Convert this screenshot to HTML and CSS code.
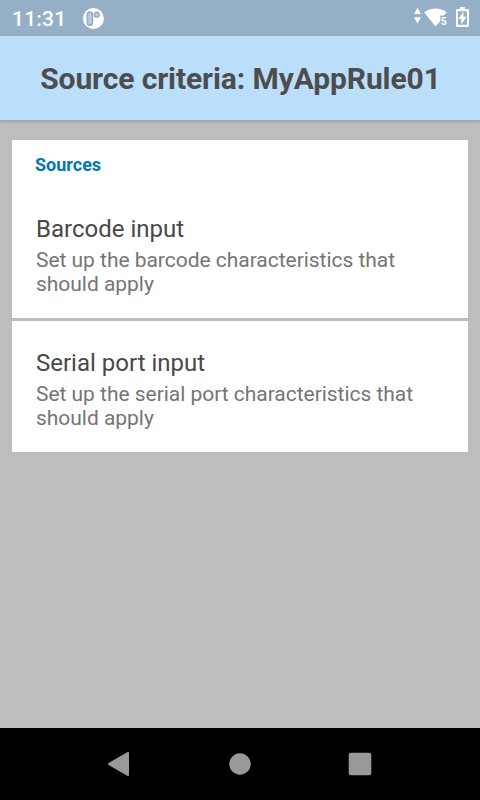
FILE: index.html
```html
<!DOCTYPE html>
<html lang="en">
<head>
<meta charset="utf-8">
<title>Source criteria</title>
<link rel="stylesheet" href="styles.css">
</head>
<body>
<div class="screen">
  <div class="status">
    <span class="clock">11:31</span>
    <svg class="app-icon" width="22" height="22" viewBox="0 0 22 22">
      <circle cx="11.4" cy="11.4" r="10.5" fill="#fff"/>
      <rect x="5.4" y="5.2" width="5" height="13" rx="2.5" fill="#bccddb" stroke="#95b0c6" stroke-width="1.7"/>
      <circle cx="14.7" cy="7.7" r="2.3" fill="#bccddb" stroke="#95b0c6" stroke-width="1.7"/>
    </svg>
    <svg class="signals" width="56" height="22" viewBox="0 0 56 22" fill="#fff">
      <path d="M4.5 .7 8 7H1zM4.5 16.4 8 10.2H1z"/>
      <path d="M11.2 5.2Q16.5 1.6 22.5 1.6T33.8 5.2L30.8 8.6H27.3V14L22.5 19.5z"/>
      <text class="band" x="27.8" y="17.8">5</text>
      <path fill-rule="evenodd" d="M44 2H46.8V0h5v2H55q1 0 1 1V19q0 1-1 1H44q-1 0-1-1V3q0-1 1-1zM45 4.2V17.8H54V4.2z"/>
      <path d="M50.4 4.4 45.4 12.1H48.3V17.6L53.5 9.8H50.4z"/>
    </svg>
  </div>
  <header class="titlebar"><h1>Source criteria: MyAppRule01</h1></header>
  <main class="content">
    <section class="card first">
      <h2>Sources</h2>
      <div class="item"><h3>Barcode input</h3><p>Set up the barcode characteristics that<br>should apply</p></div>
    </section>
    <section class="card">
      <div class="item"><h3>Serial port input</h3><p>Set up the serial port characteristics that<br>should apply</p></div>
    </section>
  </main>
  <nav class="navbar">
    <svg width="480" height="72" viewBox="0 0 480 72" fill="#999">
      <path d="M108.6 35 127.2 24.2Q129 23.3 129 25.2V46.8Q129 48.7 127.2 47.8L108.6 37Q107.4 36 108.6 35z"/>
      <circle cx="240" cy="36" r="10.7"/>
      <rect x="348.7" y="24.7" width="22.6" height="22.6" rx="2"/>
    </svg>
  </nav>
</div>
</body>
</html>
```

FILE: styles.css
```css
* { box-sizing: border-box; }
body, h1, h2, h3, p { margin: 0; }
body { font-family: Roboto, sans-serif; }
svg { display: block; }
.screen {
  display: flex;
  flex-direction: column;
  width: 480px;
  height: 800px;
  background: #bdbdbd;
  overflow: hidden;
}
.status {
  flex: none;
  display: flex;
  align-items: flex-start;
  height: 36px;
  padding: 7px 11px 0 12px;
  background: #95b0c6;
  color: #fff;
}
.clock {
  width: 70px;
  font-size: 21px;
  line-height: 24px;
  font-weight: 500;
  letter-spacing: 0.2px;
}
.signals { margin-left: auto; }
.band { font-size: 10.5px; font-weight: 700; }
.titlebar {
  flex: none;
  height: 84px;
  padding: 24px 0 0 1px;
  background: #bbdefb;
  box-shadow: 0 2px 3px rgba(0, 0, 0, 0.15);
  clip-path: inset(0 0 -8px 0);
  text-align: center;
}
h1 {
  font-size: 30px;
  line-height: 38px;
  font-weight: 700;
  letter-spacing: -0.1px;
  color: #4d4d4d;
  white-space: nowrap;
}
.content {
  flex: 1;
  display: flex;
  flex-direction: column;
  gap: 3px;
  padding: 20px 12px 0;
}
.card { height: 131px; background: #fff; padding: 26px 24px 0; }
.card.first { height: 178px; padding-top: 14px; }
h2 {
  margin: 0 0 38px -1px;
  font-size: 18px;
  line-height: 22px;
  font-weight: 700;
  color: #0277b0;
}
.item { white-space: nowrap; }
.first .item { margin-top: -1px; }
h3 {
  font-size: 24px;
  line-height: 32px;
  font-weight: 400;
  color: #484848;
}
p {
  margin-top: 3px;
  font-size: 21px;
  line-height: 24px;
  letter-spacing: -0.03px;
  color: #757575;
}
.navbar { flex: none; height: 72px; background: #000; }
```
